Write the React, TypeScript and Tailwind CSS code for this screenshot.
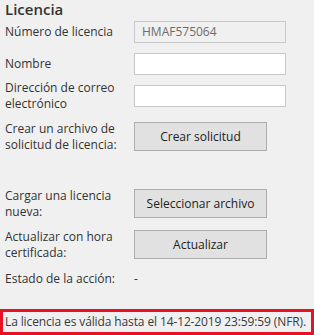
const font = { fontFamily: '"Open Sans", "Noto Sans", sans-serif' }

function Btn({ children }: { children: React.ReactNode }) {
  return (
    <button className="h-[29px] w-[133px] border border-[#adadad] bg-[#e1e1e1] text-[12px] text-[#222]">
      {children}
    </button>
  )
}

function Field({ value }: { value?: string }) {
  return (
    <div
      className={`flex h-[22px] w-[152px] items-center border border-[#c8c8c8] px-[7px] text-[12px] ${
        value ? 'bg-[#f0f0f0] text-[#6d6d6d]' : 'bg-white'
      }`}
    >
      {value}
    </div>
  )
}

export default function App() {
  return (
    <div
      style={font}
      className="flex h-[335px] w-[314px] flex-col overflow-hidden bg-[#f0f0f0] text-[12px] leading-[16px] text-[#333]"
    >
      <div className="px-[5px]">
        <h1 className="h-[19px] text-[15px] font-semibold leading-[19px] text-[#333]">
          Licencia
        </h1>

        <div className="mt-[2px] flex h-[22px] items-center">
          <span className="w-[129px]">Número de licencia</span>
          <Field value="HMAF575064" />
        </div>

        <div className="mt-[10px] flex h-[22px] items-center">
          <span className="w-[129px]">Nombre</span>
          <Field />
        </div>

        <div className="mt-[10px] flex h-[22px] items-center">
          <span className="w-[129px]">
            Dirección de correo
            <br />
            electrónico
          </span>
          <Field />
        </div>

        <div className="mt-[15px] flex h-[29px] items-center">
          <span className="w-[129px]">
            Crear un archivo de
            <br />
            solicitud de licencia:
          </span>
          <Btn>Crear solicitud</Btn>
        </div>

        <div className="mt-[38px] flex h-[29px] items-center">
          <span className="w-[129px]">
            Cargar una licencia
            <br />
            nueva:
          </span>
          <Btn>Seleccionar archivo</Btn>
        </div>

        <div className="mt-[12px] flex h-[29px] items-center">
          <span className="w-[129px]">
            Actualizar con hora
            <br />
            certificada:
          </span>
          <Btn>Actualizar</Btn>
        </div>

        <div className="mt-[12px] flex h-[16px] items-center">
          <span className="w-[129px]">Estado de la acción:</span>
          <span>-</span>
        </div>
      </div>

      <div className="mt-[22px] flex h-[29px] w-[314px] items-center whitespace-nowrap border-[3px] border-[#e81123] px-[2px] text-[12px] tracking-[-0.12px] text-[#3a3a3a]">
        La licencia es válida hasta el 14-12-2019 23:59:59 (NFR).
      </div>
    </div>
  )
}
